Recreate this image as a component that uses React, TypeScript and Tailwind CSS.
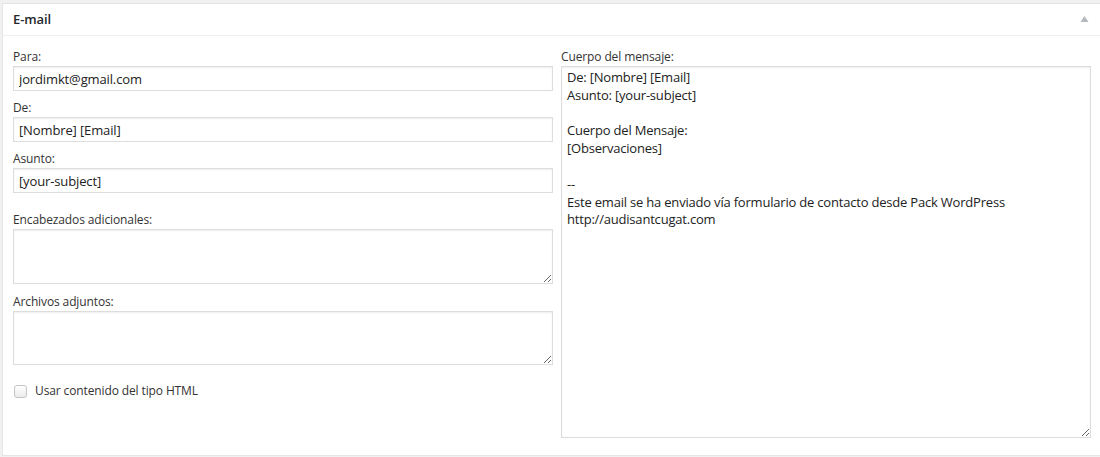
import React from "react";

const inputCls =
  "block w-full h-[25px] border border-[#ddd] bg-white px-[5px] text-[13px] tracking-[-0.13px] leading-[23px] text-[#222] shadow-[inset_0_1px_2px_rgba(0,0,0,0.07)] outline-none";
const labelCls = "block h-[18px] text-[12px] tracking-[-0.12px] leading-[18px] text-[#333]";

export default function App() {
  return (
    <div
      className="w-[1100px] h-[457px] bg-[#f1f1f1] pt-[3px] pl-[2px] overflow-hidden"
      style={{ fontFamily: '"Open Sans", "Noto Sans", sans-serif' }}
    >
      <div className="h-[453px] bg-white border border-r-0 border-[#e5e5e5]">
        <div className="h-[32px] border-b border-[#eee] pl-[10px] pr-[11px] flex items-center justify-between">
          <span className="text-[13px] tracking-[-0.1px] font-semibold text-[#23282d]">E-mail</span>
          <svg width="9" height="8" viewBox="0 0 9 8" className="mt-[-1px]">
            <polygon points="4.5,1 8.5,7 0.5,7" fill="#b4b9be" />
          </svg>
        </div>
        <div className="flex pl-[10px] pt-[12px]">
          <div className="w-[540px] flex flex-col">
            <label className={labelCls}>Para:</label>
            <input className={inputCls} defaultValue="jordimkt@gmail.com" />
            <label className={labelCls + " mt-[8px]"}>De:</label>
            <input className={inputCls} defaultValue="[Nombre] [Email]" />
            <label className={labelCls + " mt-[8px]"}>Asunto:</label>
            <input className={inputCls} defaultValue="[your-subject]" />
            <label className={labelCls + " mt-[18px]"}>Encabezados adicionales:</label>
            <textarea className="block w-full h-[55px] border border-[#ddd] bg-white shadow-[inset_0_1px_2px_rgba(0,0,0,0.07)] outline-none" />
            <label className={labelCls + " mt-[9px]"}>Archivos adjuntos:</label>
            <textarea className="block w-full h-[54px] border border-[#ddd] bg-white shadow-[inset_0_1px_2px_rgba(0,0,0,0.07)] outline-none" />
            <div className="mt-[17px] flex items-center h-[18px]">
              <span className="ml-[1px] w-[13px] h-[13px] rounded-[3px] border border-[#c4c4c4] bg-gradient-to-b from-white to-[#ececec]" />
              <span className="ml-[8px] text-[12px] tracking-[-0.12px] text-[#333]">Usar contenido del tipo HTML</span>
            </div>
          </div>
          <div className="ml-[8px] w-[530px] flex flex-col">
            <label className={labelCls}>Cuerpo del mensaje:</label>
            <textarea
              className="block w-full h-[372px] border border-[#ddd] bg-white px-[5px] pt-[2px] text-[13px] tracking-[-0.2px] leading-[17.8px] text-[#222] shadow-[inset_0_1px_2px_rgba(0,0,0,0.07)] outline-none"
              defaultValue={`De: [Nombre] [Email]
Asunto: [your-subject]

Cuerpo del Mensaje:
[Observaciones]

--
Este email se ha enviado vía formulario de contacto desde Pack WordPress
http://audisantcugat.com`}
            />
          </div>
        </div>
      </div>
    </div>
  );
}
